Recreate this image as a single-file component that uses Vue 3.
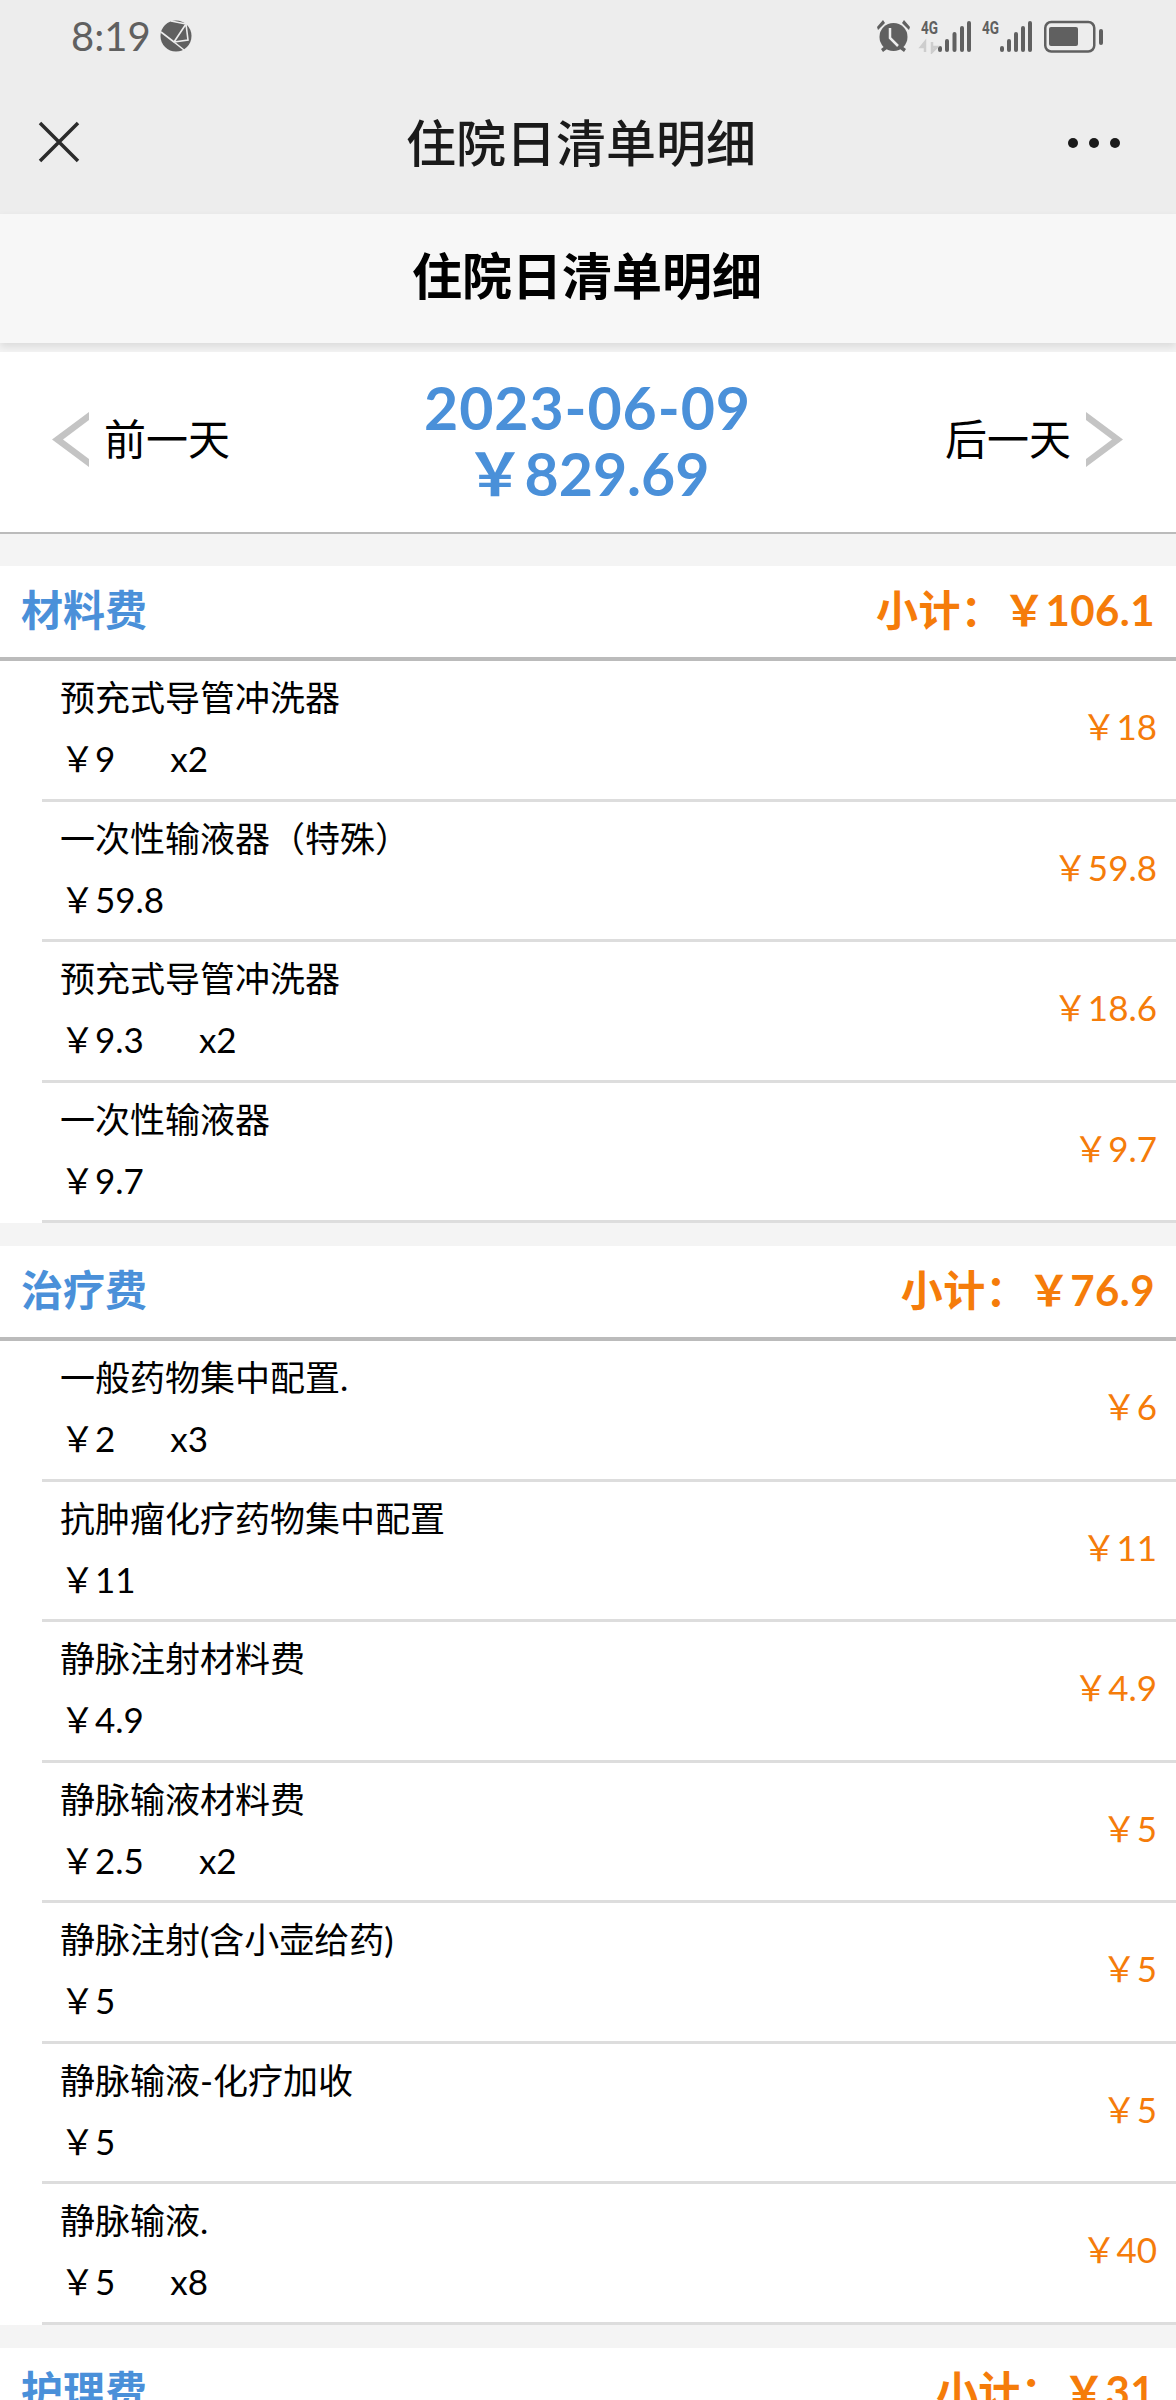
<script setup>
const sections = [
  {
    name: '材料费',
    total: '106.1',
    items: [
      { title: '预充式导管冲洗器', price: '9', qty: 'x2', sum: '18' },
      { title: '一次性输液器（特殊）', price: '59.8', sum: '59.8' },
      { title: '预充式导管冲洗器', price: '9.3', qty: 'x2', sum: '18.6' },
      { title: '一次性输液器', price: '9.7', sum: '9.7' },
    ],
  },
  {
    name: '治疗费',
    total: '76.9',
    items: [
      { title: '一般药物集中配置.', price: '2', qty: 'x3', sum: '6' },
      { title: '抗肿瘤化疗药物集中配置', price: '11', sum: '11' },
      { title: '静脉注射材料费', price: '4.9', sum: '4.9' },
      { title: '静脉输液材料费', price: '2.5', qty: 'x2', sum: '5' },
      { title: '静脉注射(含小壶给药)', price: '5', sum: '5' },
      { title: '静脉输液-化疗加收', price: '5', sum: '5' },
      { title: '静脉输液.', price: '5', qty: 'x8', sum: '40' },
    ],
  },
  { name: '护理费', total: '31', items: [] },
]
</script>

<template>
  <div class="page">
    <div class="topbar">
      <div class="status">
        <div class="status-left">
          <span class="time">8:19</span>
          <svg class="globe" width="32" height="32" viewBox="0 0 32 32">
            <circle cx="16" cy="16" r="15.5" fill="#606060" />
            <path d="M1 12 L14 22 L26 4 M14 22 L24 30 M26 4 L28 20 L14 22 M11 1 L26 4" fill="none" stroke="#ededed" stroke-width="1.6" />
          </svg>
        </div>
        <svg class="status-right" width="228" height="36" viewBox="877 18 228 36">
          <g fill="#606060">
            <circle cx="893.5" cy="37" r="14" />
            <path d="M878 30 L885 23 L883 20 L877 27 Z M909 30 L902 23 L904 20 L910 27 Z M881 49 L885 46 L887 49 L883 52 Z M906 49 L902 46 L900 49 L904 52 Z" />
            <text x="921" y="34" font-family="Roboto, sans-serif" font-size="18" font-weight="700" textLength="17" lengthAdjust="spacingAndGlyphs">4G</text>
            <text x="982" y="34" font-family="Roboto, sans-serif" font-size="18" font-weight="700" textLength="17" lengthAdjust="spacingAndGlyphs">4G</text>
            <rect x="938" y="46" width="4" height="6" rx="2" />
            <rect x="945" y="39" width="4" height="13" rx="2" />
            <rect x="952.500" y="32" width="4" height="20" rx="2" />
            <rect x="960" y="26" width="4" height="26" rx="2" />
            <rect x="967" y="21" width="4" height="31" rx="2" />
            <rect x="1000" y="46" width="4" height="6" rx="2" />
            <rect x="1007" y="39" width="4" height="13" rx="2" />
            <rect x="1014" y="32" width="4" height="20" rx="2" />
            <rect x="1021" y="26" width="4" height="26" rx="2" />
            <rect x="1028" y="21" width="4" height="31" rx="2" />
            <rect x="1049" y="27" width="29" height="19" rx="2" />
            <rect x="1099" y="29" width="4" height="16" rx="2" />
          </g>
          <path d="M890 28 V38 L898 46" fill="none" stroke="#ededed" stroke-width="2.500" />
          <path d="M925 52 V42 L921 47 H925 M932 42 V52 L937 47 H932" fill="none" stroke="#cdcdcd" stroke-width="2.500" />
          <rect x="1045.250" y="22" width="49" height="29.500" rx="6" fill="none" stroke="#606060" stroke-width="2.500" />
        </svg>
      </div>
      <div class="nav">
        <svg width="42" height="42" viewBox="0 0 42 42">
          <path d="M2 2 L40 40 M40 2 L2 40" stroke="#2b2b2b" stroke-width="3.500" fill="none" />
        </svg>
        <span class="nav-title">住院日清单明细</span>
        <div class="dots"><i></i><i></i><i></i></div>
      </div>
    </div>

    <div class="header">住院日清单明细</div>

    <div class="datebar">
      <div class="side">
        <svg width="37" height="55" viewBox="0 0 37 55">
          <path d="M37 0 L0 27.500 L37 55 V47 L11 27.500 L37 8 Z" fill="#c4c4c4" />
        </svg>
        <span>前一天</span>
      </div>
      <div class="date">
        <div class="day">2023-06-09</div>
        <div>￥829.69</div>
      </div>
      <div class="side side-right">
        <span>后一天</span>
        <svg width="37" height="55" viewBox="0 0 37 55">
          <path d="M0 0 L37 27.500 L0 55 V47 L26 27.500 L0 8 Z" fill="#c4c4c4" />
        </svg>
      </div>
    </div>

    <div v-for="sec in sections" :key="sec.name" class="section">
      <div class="sec-head">
        <span class="sec-name">{{ sec.name }}</span>
        <span class="sec-total">小计：￥{{ sec.total }}</span>
      </div>
      <div v-for="(item, i) in sec.items" :key="i" class="row">
        <div class="row-inner">
          <div class="row-text">
            <div class="row-title">{{ item.title }}</div>
            <div class="row-price">
              ￥{{ item.price }}<span v-if="item.qty" class="qty">{{ item.qty }}</span>
            </div>
          </div>
          <div class="row-sum">￥{{ item.sum }}</div>
        </div>
      </div>
    </div>
  </div>
</template>

<style scoped>
.page {
  width: 1176px;
  height: 2400px;
  overflow: hidden;
  background: #f4f4f4;
  font-family: Lato, "Noto Sans CJK SC", sans-serif;
  color: #000;
}

.topbar {
  height: 214px;
  background: #ededed;
}
.status {
  height: 72px;
  padding: 0 71px 0 71px;
  box-sizing: border-box;
  display: flex;
  justify-content: space-between;
  align-items: center;
}
.status-left {
  display: flex;
  align-items: center;
  gap: 9px;
}
.time {
  font-size: 40px;
  color: #606060;
}
.nav {
  height: 142px;
  padding: 0 56px 0 38px;
  box-sizing: border-box;
  display: flex;
  justify-content: space-between;
  align-items: center;
  position: relative;
}
.nav svg {
  margin-bottom: 2px;
}
.nav-title {
  font-size: 50px;
  font-weight: 500;
  color: #1a1a1a;
  position: absolute;
  left: 406px;
  top: 41px;
  line-height: 60px;
}
.dots {
  display: flex;
  gap: 11px;
}
.dots i {
  width: 10px;
  height: 10px;
  border-radius: 50%;
  background: #1a1a1a;
}

.header {
  height: 129px;
  background: #f7f7f7;
  text-align: center;
  font-size: 50px;
  font-weight: 700;
  line-height: 124px;
  padding-right: 2px;
  box-shadow: 0 4px 8px rgba(0, 0, 0, 0.1);
  position: relative;
}

.datebar {
  margin-top: 9px;
  height: 180px;
  background: #fff;
  border-bottom: 2px solid #bbb;
  display: flex;
  justify-content: space-between;
  align-items: center;
  padding: 0 53px 0 52px;
  position: relative;
}
.side {
  display: flex;
  align-items: center;
  gap: 15px;
  font-size: 42px;
  width: 210px;
  margin-top: -8px;
}
.side span {
  margin-top: -3px;
}
.side svg {
  margin-top: 2px;
}
.side-right {
  justify-content: flex-end;
}
.date {
  color: #4a90d9;
  font-size: 59px;
  font-weight: 700;
  line-height: 66px;
  text-align: center;
  margin-top: -2px;
}
.day {
  letter-spacing: 0.9px;
}

.section {
  margin-top: 23px;
  background: #fff;
}
.datebar + .section {
  margin-top: 32px;
}
.sec-head {
  height: 91px;
  box-sizing: content-box;
  border-bottom: 4px solid #bbb;
  padding: 0 21px;
  display: flex;
  justify-content: space-between;
  align-items: center;
  font-weight: 700;
  font-size: 42px;
}
.sec-name,
.sec-total {
  margin-top: -9px;
}
.sec-name {
  color: #4a90d9;
}
.sec-total {
  color: #f57c0a;
  letter-spacing: 0.4px;
}
.row {
  padding-left: 42px;
}
.row-inner {
  height: 140.5px;
  box-sizing: border-box;
  border-bottom: 3px solid #ddd;
  padding: 0 19px 0 18px;
  display: flex;
  justify-content: space-between;
  align-items: center;
}
.row-text {
  margin-bottom: 3px;
}
.row-title,
.row-price {
  font-size: 35px;
  line-height: 61px;
  height: 61px;
}
.qty {
  margin-left: 55px;
}
.row-sum {
  font-size: 35px;
  color: #f57c0a;
  margin-bottom: 10px;
}
</style>

<style>
html,
body {
  margin: 0;
  background: #f4f4f4;
}
</style>
